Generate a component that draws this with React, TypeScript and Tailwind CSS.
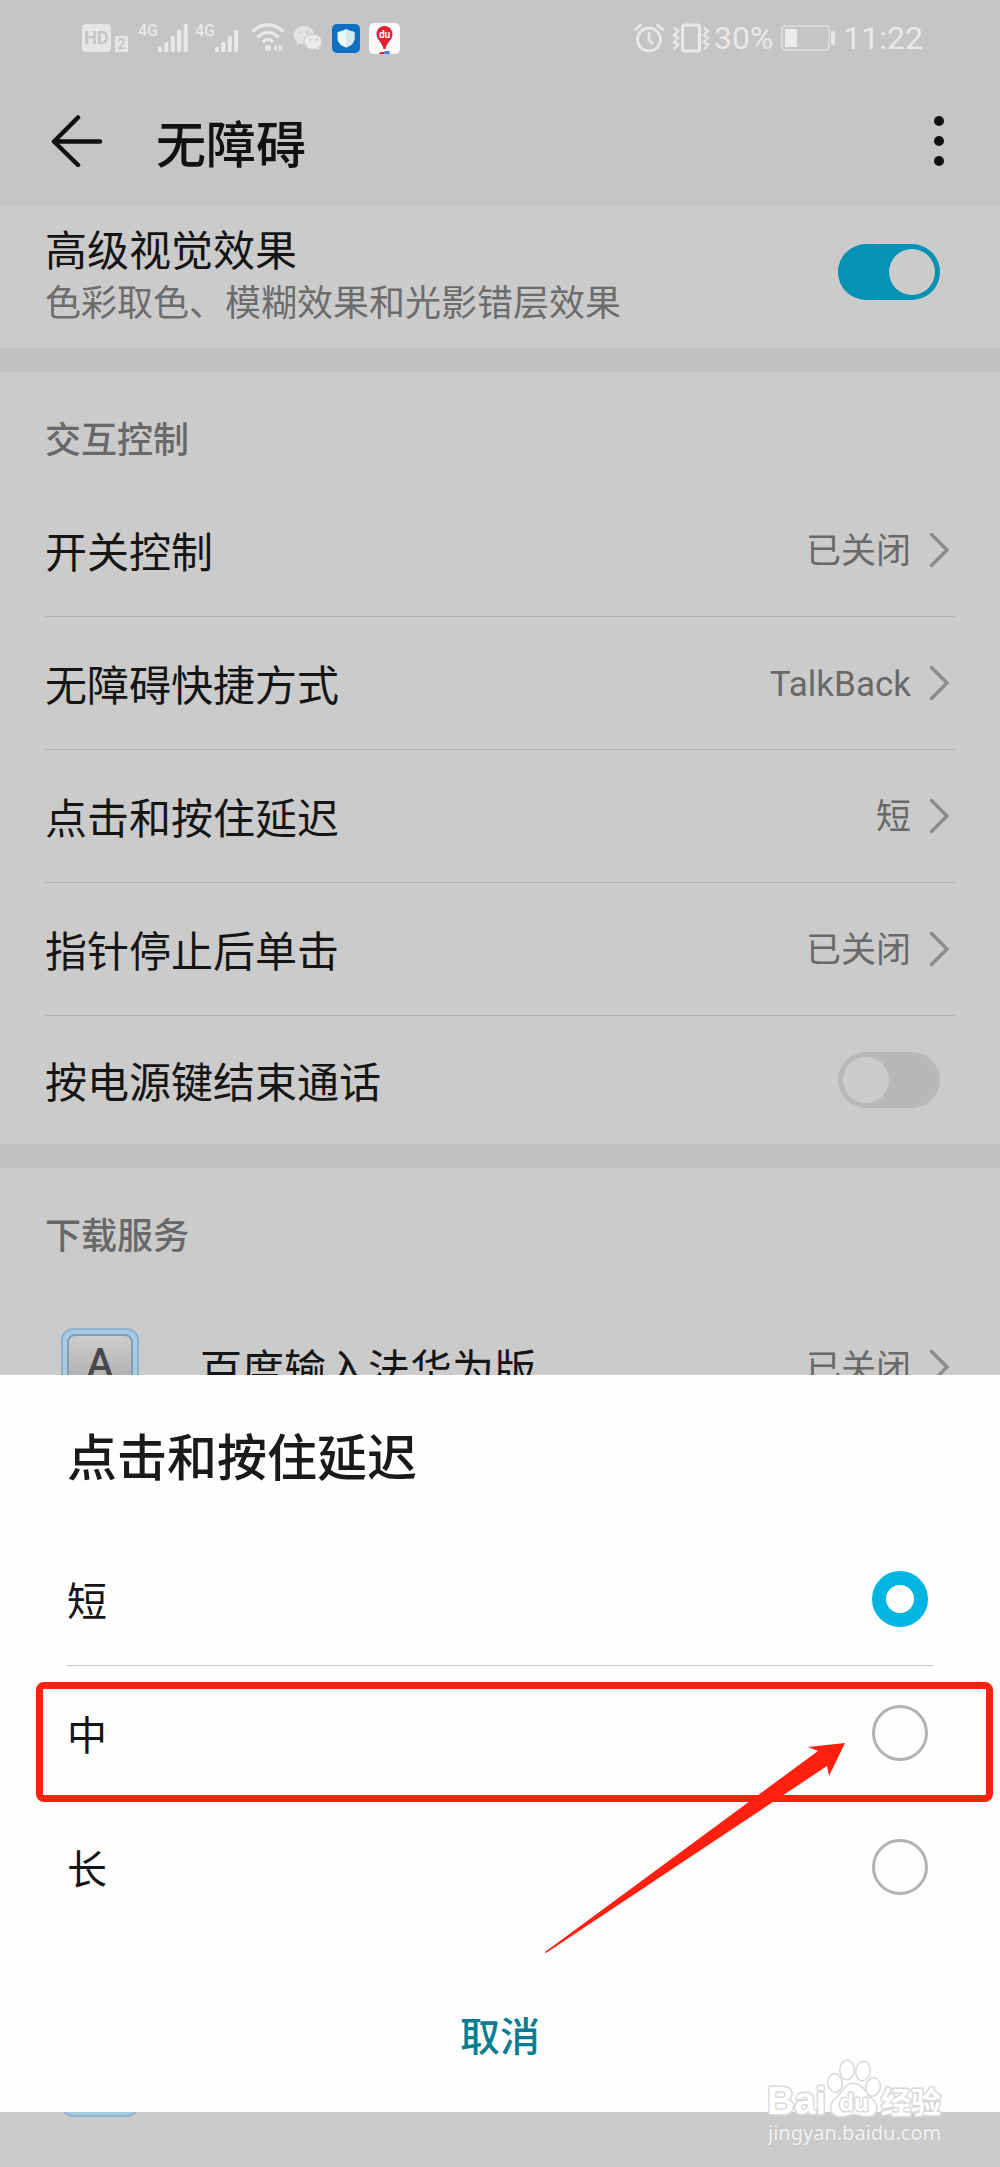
import React, { useState } from 'react';

const fontStack = "font-['Noto_Sans_CJK_SC',Roboto,sans-serif]";

const delayOptions = ['短', '中', '长'];

const controls = [
  { label: '开关控制', value: '已关闭' },
  { label: '无障碍快捷方式', value: 'TalkBack' },
  { label: '点击和按住延迟', value: '短' },
  { label: '指针停止后单击', value: '已关闭' },
];

const Chevron = () => (
  <svg width="20" height="36" viewBox="0 0 20 36" fill="none" stroke="#8c8c8c" strokeWidth="3.5" strokeLinecap="round">
    <path d="M2.5 2.5 L18 18 L2.5 33.5" />
  </svg>
);

const Value = ({ children }: { children: React.ReactNode }) => (
  <span className="mr-[18px] text-[35px] leading-[48px] text-[#696969]">
    <span className="font-[Roboto,'Noto_Sans_CJK_SC',sans-serif]">{children}</span>
  </span>
);

const Signal = ({ bars }: { bars: number }) => (
  <div className="flex">
    <span className="text-base leading-4 font-medium">4G</span>
    <svg width="32" height="30" viewBox="0 0 32 30" fill="currentColor">
      {[5, 10, 16, 22, 28].slice(0, bars).map((h, i) => (
        <rect key={h} x={i * 6.4} y={29 - h} width="4" height={h} rx="1" />
      ))}
    </svg>
  </div>
);

const StatusBar = () => (
  <div className="flex items-center justify-between h-[76px] pl-[82px] pr-[77px] text-[#e9e9e9] font-[Roboto,sans-serif]">
    <div className="flex items-center">
      <div className="flex items-end gap-1 mr-[10px]">
        <span className="w-[29px] h-[28px] rounded bg-[#e6e6e6] text-[#c5c5c5] text-lg leading-7 font-bold text-center">HD</span>
        <span className="w-[13px] h-4 bg-[#e6e6e6] text-[#c5c5c5] text-sm leading-4 font-bold text-center">2</span>
      </div>
      <Signal bars={5} />
      <div className="w-[5px]" />
      <Signal bars={4} />
      {/* Wifi */}
      <svg className="ml-1" width="34" height="30" viewBox="0 0 34 30" fill="none" stroke="currentColor" strokeWidth="3.2">
        <path d="M1.5 9 C10 -0.5 24 -0.5 32.5 9" />
        <path d="M6.5 14.5 C12 8 22 8 27.5 14.5" />
        <path d="M11.5 19.5 C15 15.5 19 15.5 22 19" />
        <circle cx="17" cy="25" r="3" fill="currentColor" stroke="none" />
        <path d="M22.5 25 L26 21 V29 Z M28 21 L32 25 L28 29 Z" fill="currentColor" stroke="none" />
      </svg>
      {/* WeChat */}
      <svg className="ml-2" width="30" height="28" viewBox="0 0 30 28">
        <path d="M11 2 C5 2 0.5 6 0.5 11 C0.5 14 2 16.5 4.5 18 L3.5 21.5 L7.5 19.5 C14 21 21.5 17 21.5 11 C21.5 6 17 2 11 2Z" fill="#e2e2e2" />
        <path d="M20 10 C14.5 10 11 13.5 11 17.5 C11 22 15 25.5 20 25.5 L23 25 L27 27 L26 24 C31 20 29.5 10 20 10Z" fill="#ebebeb" stroke="#c5c5c5" strokeWidth="1" />
        <g fill="#c5c5c5">
          <circle cx="7.5" cy="8.5" r="1.3" />
          <circle cx="14.5" cy="8" r="1.3" />
          <circle cx="17.5" cy="15.5" r="1.1" />
          <circle cx="23.5" cy="15.5" r="1.1" />
        </g>
      </svg>
      {/* Phone manager */}
      <svg className="ml-[9px]" width="28" height="29" viewBox="0 0 28 29">
        <rect width="28" height="29" rx="5" fill="#0f6fc0" />
        <path d="M14 5 C17 7 20 7.5 22.5 8 V14 C22.5 19 18.5 22 14 23.5 C9.5 22 5.5 19 5.5 14 V8 C8 7.5 11 7 14 5Z" fill="#eef7fb" />
        <path d="M14 5 C17 7 20 7.5 22.5 8 V14 C22.5 19 18.5 22 14 23.5Z" fill="#d3e9ee" />
      </svg>
      {/* Baidu map */}
      <svg className="ml-[9px]" width="31" height="31" viewBox="0 0 31 31">
        <rect width="31" height="31" rx="5" fill="#fafafa" />
        <path d="M11 29 H15.5 V31 H10Z" fill="#d6303c" />
        <path d="M15.5 28 H20 L21 31 H15.5Z" fill="#3a7fd8" />
        <path d="M15.5 3 C10.5 3 7.5 7 7.5 11.5 C7.5 16.500 13 19 14.500 26 H16.500 C18 19 23.500 16.500 23.500 11.500 C23.500 7 20.500 3 15.500 3Z" fill="#e2202f" />
        <text x="15.5" y="15" textAnchor="middle" fontSize="10" fontWeight="700" fill="#fff">du</text>
      </svg>
    </div>

    <div className="flex items-center">
      {/* Alarm */}
      <svg width="30" height="30" viewBox="0 0 30 30" fill="none" stroke="currentColor" strokeWidth="2.8" strokeLinecap="round">
        <circle cx="15" cy="16.5" r="11.5" />
        <path d="M15 10.5 V17 L18.5 20.5 M1.5 6.5 L6.500 2 M23.500 2 L28.500 6.500" />
      </svg>
      {/* Vibrate */}
      <svg className="ml-2" width="38" height="30" viewBox="0 0 38 30" fill="none" stroke="currentColor">
        <rect x="10.5" y="2" width="17" height="26" rx="2" strokeWidth="3" />
        <path d="M2 5 L6 8 L2 12 L6 15 L2 19 L6 22 L2 26 M32 5 L36 8 L32 12 L36 15 L32 19 L36 22 L32 26" strokeWidth="2.4" />
      </svg>
      <span className="ml-1 text-[32px] leading-8">30%</span>
      {/* Battery */}
      <svg className="ml-2" width="54" height="26" viewBox="0 0 54 26">
        <rect x="1" y="1" width="47" height="24" rx="3" fill="none" stroke="#dedede" strokeWidth="1.500" />
        <rect x="4" y="4" width="12" height="18" fill="#ececec" />
        <rect x="50" y="6" width="4" height="14" rx="1" fill="#e6e6e6" />
      </svg>
      <span className="ml-2 text-[32px] leading-8">11:22</span>
    </div>
  </div>
);

const Header = () => (
  <header className="flex items-center h-[130px] px-[51px]">
    <button aria-label="返回">
      <svg width="52" height="52" viewBox="0 0 52 52" fill="none" stroke="#111" strokeWidth="4.5" strokeLinecap="round" strokeLinejoin="round">
        <path d="M49 26.5 H3 M27 2.5 L3 26.5 L27 50" />
      </svg>
    </button>
    <h1 className="ml-[53px] flex-1 text-[50px] leading-[64px] font-medium text-[#111]">无障碍</h1>
    <button aria-label="更多">
      <svg width="20" height="52" viewBox="0 0 20 52" fill="#111">
        <circle cx="10" cy="6" r="5" />
        <circle cx="10" cy="26" r="5" />
        <circle cx="10" cy="46" r="5" />
      </svg>
    </button>
  </header>
);

const Switch = ({ id, on }: { id: string; on?: boolean }) => (
  <input
    id={id}
    type="checkbox"
    role="switch"
    defaultChecked={on}
    className="appearance-none flex items-center shrink-0 w-[102px] h-14 px-[5px] rounded-full bg-[#b8b8b8] checked:bg-[#0391b6] checked:justify-end before:size-[46px] before:rounded-full before:bg-[#cbcbcb]"
  />
);

const SectionTitle = ({ children }: { children: React.ReactNode }) => (
  <h2 className="h-28 pt-[41px] px-[45px] text-4xl leading-[48px] font-medium text-[#686868]">{children}</h2>
);

const Divider = () => <div className="h-6 bg-[#c2c2c2]" />;

const KeyIcon = () => (
  <div className="size-[78px] p-1 rounded-xl border-2 border-[#8eb3ce] bg-[#a9cbe2]">
    <div className="size-full rounded-lg border-2 border-[#7d9fbc] bg-gradient-to-b from-[#cfcccc] to-[#a3a3a3] text-center text-[40px] leading-[56px] font-medium text-[#4a484d] font-[Roboto,sans-serif]">
      A
    </div>
  </div>
);

const Settings = () => (
  <main>
    <div className="flex items-center justify-between pt-[14px] pb-6 pl-[45px] pr-[60px]">
      <label htmlFor="visual">
        <span className="block text-[42px] leading-[56px] text-[#151515]">高级视觉效果</span>
        <span className="block text-4xl leading-[48px] text-[#6c6c6c]">色彩取色、模糊效果和光影错层效果</span>
      </label>
      <Switch id="visual" on />
    </div>
    <Divider />

    <SectionTitle>交互控制</SectionTitle>
    {controls.map(({ label, value }) => (
      <button key={label} className="flex items-center w-full px-[45px] text-left">
        <span className="flex items-center flex-1 h-[133px] pr-[6px] border-b border-[#afafaf]">
          <span className="flex-1 text-[42px] leading-[56px] text-[#151515]">{label}</span>
          <Value>{value}</Value>
          <Chevron />
        </span>
      </button>
    ))}
    <div className="flex items-center justify-between h-32 pl-[45px] pr-[60px]">
      <label htmlFor="power" className="text-[42px] leading-[56px] text-[#151515]">按电源键结束通话</label>
      <Switch id="power" />
    </div>
    <Divider />

    <SectionTitle>下载服务</SectionTitle>
    <button className="flex items-center w-full h-[174px] pl-[61px] pr-[51px] text-left">
      <KeyIcon />
      <span className="ml-[61px] flex-1 text-[42px] leading-[56px] text-[#151515]">百度输入法华为版</span>
      <Value>已关闭</Value>
      <Chevron />
    </button>
  </main>
);

const DelaySheet = () => {
  const [delay, setDelay] = useState('短');

  return (
    <section role="dialog" aria-labelledby="sheet-title" className="absolute inset-x-0 bottom-[55px] bg-[#fefefe]">
      <h2 id="sheet-title" className="pt-[47px] pb-[46px] px-[67px] text-[50px] leading-[64px] font-medium text-[#1a1a1a]">
        点击和按住延迟
      </h2>
      {delayOptions.map((option, i) => (
        <div key={option} className="relative px-[67px]">
          <label className={`flex items-center justify-between h-[134px] pr-[5px] text-[40px] leading-[56px] text-[#151515] ${i === 0 ? 'border-b border-[#c6c6c6]' : ''}`}>
            {option}
            <input
              type="radio"
              name="delay"
              checked={delay === option}
              onChange={() => setDelay(option)}
              className="appearance-none size-14 rounded-full border-[3px] border-[#b3b3b3] checked:border-[14px] checked:border-[#00b5e1]"
            />
          </label>
          {option === '中' && (
            <div className="absolute top-4 left-9 right-[7px] h-[120px] rounded-lg border-[7px] border-[#ff2010] pointer-events-none" />
          )}
        </div>
      ))}
      <svg className="absolute top-[368px] right-[155px] pointer-events-none" width="300" height="210" viewBox="0 0 300 210" fill="#ff2010">
        <path d="M0 209 L273 8 L263 4 L300 0 L284 33 L282 23 L1 210Z" />
      </svg>
      <div className="flex justify-center pt-[68px] pb-[46px]">
        <button className="text-[40px] leading-[64px] font-medium text-[#0b7d92]">取消</button>
      </div>
    </section>
  );
};

const Watermark = () => (
  <svg className="absolute right-[52px] bottom-[18px] pointer-events-none overflow-visible" width="184" height="92" viewBox="0 0 184 92" fill="#fff" stroke="#d9d9d9" strokeWidth="3" strokeLinejoin="round" paintOrder="stroke">
    <g fontFamily="'Liberation Sans', sans-serif" fontWeight="700">
      <text x="3" y="57" fontSize="38">Bai</text>
      <ellipse cx="71" cy="26" rx="6.5" ry="8.5" transform="rotate(-8 71 26)" />
      <ellipse cx="83" cy="13" rx="6.5" ry="9" />
      <ellipse cx="99" cy="14" rx="6.5" ry="9" transform="rotate(8 99 14)" />
      <ellipse cx="109" cy="30" rx="6.5" ry="8.500" transform="rotate(12 109 30)" />
      <path d="M89 27 C81 27 79 36 73 41 C64 48 66 59 77 59 C83 59 85 57 90 57 C95 57 98 59 103 59 C114 59 115 48 107 42 C101 36 98 27 89 27Z" />
      <text x="90" y="54" fontSize="24" textAnchor="middle">du</text>
    </g>
    <text x="117" y="56" fontSize="30" fontWeight="700" fontFamily="'Noto Sans CJK SC', sans-serif">经验</text>
    <text x="4" y="83" fontSize="20" fill="#f4f4f4" stroke="#bfbfbf" strokeWidth="1" fontFamily="'Noto Sans', sans-serif">jingyan.baidu.com</text>
  </svg>
);

const App = () => {
  return (
    <div className={`relative flex flex-col min-h-screen overflow-hidden bg-[#cbcbcb] ${fontStack}`}>
      <div className="bg-[#c5c5c5]">
        <StatusBar />
        <Header />
      </div>
      <Settings />
      <div className="mt-auto pl-[61px] pb-[50px]">
        <KeyIcon />
      </div>
      <DelaySheet />
      <Watermark />
    </div>
  );
};

export default App;
